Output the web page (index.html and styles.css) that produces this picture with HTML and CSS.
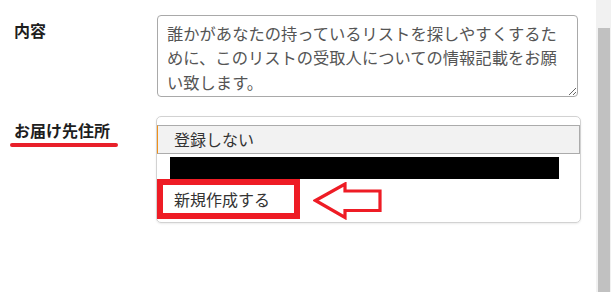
FILE: index.html
```html
<!DOCTYPE html>
<html lang="ja">
<head>
<meta charset="utf-8">
<link rel="stylesheet" href="styles.css">
</head>
<body>
<div class="page">
  <main class="form">
    <div class="row row-content">
      <div class="label">内容</div>
      <textarea class="memo">誰かがあなたの持っているリストを探しやすくするために、このリストの受取人についての情報記載をお願い致します。</textarea>
    </div>
    <div class="row row-address">
      <div class="label">
        <span>お届け先住所</span>
        <div class="underline"></div>
      </div>
      <div class="listbox">
        <div class="option selected">登録しない</div>
        <div class="redacted"></div>
        <div class="new-row">
          <div class="option boxed">新規作成する</div>
          <svg class="arrow" width="69" height="38" viewBox="0 0 69 38">
            <polygon points="2.5,18.5 32,2 32,9 67,9 67,28.5 32,28.5 32,35.5" fill="#fff" stroke="#ee1c25" stroke-width="3.2" stroke-linejoin="miter"/>
          </svg>
        </div>
      </div>
    </div>
  </main>
  <div class="scrollbar">
    <div class="track-top"></div>
    <div class="thumb"></div>
  </div>
</div>
</body>
</html>
```

FILE: styles.css
```css
html, body {
  margin: 0;
  padding: 0;
  background: #fff;
}
body {
  font-family: "Noto Sans CJK JP", "Noto Sans", sans-serif;
  color: #222;
  overflow: hidden;
}
.page {
  display: flex;
  width: 611px;
  height: 292px;
}
.form {
  flex: 1;
  padding-top: 15px;
}
.row {
  display: grid;
  grid-template-columns: 157px 1fr;
}
.label {
  padding-left: 14px;
  font-size: 16px;
  font-weight: 700;
  line-height: 24px;
  color: #1e1e1e;
}
.row-content .label {
  padding-top: 3px;
}
.memo {
  width: 421px;
  height: 82px;
  box-sizing: border-box;
  margin: 0;
  padding: 5px 9px 4px 9px;
  border: 1px solid #a9a9a9;
  border-radius: 4px;
  font-family: "Noto Sans CJK JP", sans-serif;
  font-size: 16.3px;
  line-height: 24.4px;
  color: #555;
  overflow: hidden;
  resize: vertical;
  display: block;
}
.row-address {
  margin-top: 19px;
}
.row-address .label {
  padding-top: 2px;
}
.underline {
  width: 108px;
  height: 4px;
  margin-top: 1px;
  margin-left: -4px;
  background: #e8202a;
  border-radius: 2px;
}
.listbox {
  margin-left: -1px;
  width: 425px;
  height: 107px;
  box-sizing: border-box;
  border: 1px solid #d2d2d2;
  border-radius: 5px;
  box-shadow: 0 1px 2px rgba(0,0,0,0.08);
  padding: 8px 0 0 0;
  font-size: 16px;
  line-height: 24px;
  color: #333;
}
.option {
  font-weight: 400;
}
.selected {
  height: 29px;
  box-sizing: border-box;
  border: 1px solid #ababab;
  border-left: 1px solid #f0901a;
  background: #f2f2f2;
  padding: 1px 0 0 16px;
}
.redacted {
  margin: 3px 0 0 13px;
  width: 389px;
  height: 22px;
  background: #000;
}
.new-row {
  display: flex;
  align-items: flex-start;
  gap: 13px;
}
.boxed {
  width: 143px;
  height: 40px;
  box-sizing: border-box;
  border: 6px solid #ee1c25;
  padding: 2px 0 0 11px;
}
.arrow {
  display: block;
  margin-top: 3px;
}
.scrollbar {
  width: 15px;
  display: flex;
  flex-direction: column;
  background: #f1f1f1;
}
.track-top {
  height: 28px;
}
.thumb {
  flex: 1;
  margin: 0 1px 0 2px;
  background: #c1c1c1;
}
```
